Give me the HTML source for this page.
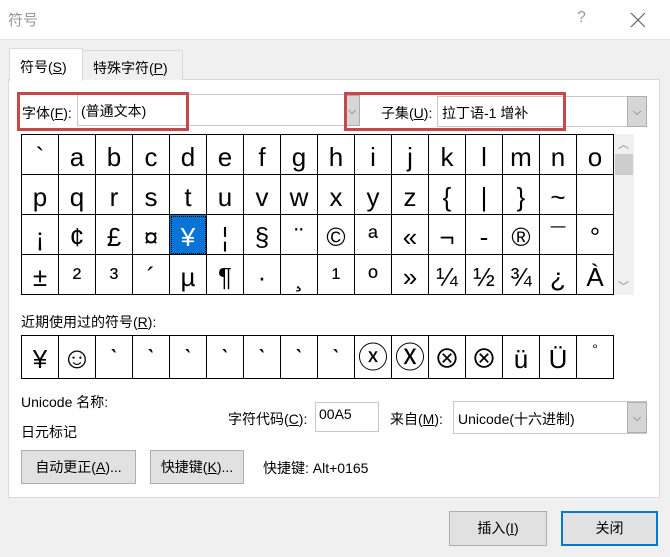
<!DOCTYPE html>
<html><head><meta charset="utf-8"><style>
*{margin:0;padding:0;box-sizing:border-box}
body{width:670px;height:557px;background:#f0f0f0;font-family:"Liberation Sans","Noto Sans CJK SC",sans-serif;font-size:14px;color:#000;position:relative;overflow:hidden}
.a{position:absolute}
.title{left:0;top:0;width:670px;height:40px;background:#fff;border-bottom:1px solid #e5e5e5}
.panel{left:8px;top:79px;width:652px;height:419px;background:#fff;border:1px solid #d9d9d9}
.grid{border-collapse:collapse;position:absolute}
.grid td{border:1px solid #000;width:37px;height:40px;text-align:center;font-size:26px;padding:4px 0 0 0;line-height:1}
.inp{background:#fff;border:1px solid #c8c8c8}
.dd{background:#d6d6d6;border:1px solid #adadad;color:#555;font-size:11px;text-align:center}
.btn{background:#e1e1e1;border:1px solid #adadad;text-align:center;font-size:14px}
.red{border:3px solid #c8474d}
u{text-decoration:underline}
</style></head><body>
<div class="a title"></div>
<div class="a" style="left:8px;top:9px;color:#999;font-size:15px">符号</div>
<div class="a" style="left:577px;top:9px;color:#999;font-size:16px">?</div>
<svg class="a" style="left:630px;top:12px" width="16" height="16"><path d="M1 1L15 15M15 1L1 15" stroke="#666" stroke-width="1.2"/></svg>
<div class="a panel"></div>
<div class="a" style="left:82px;top:50px;width:101px;height:30px;background:#f0f0f0;border:1px solid #d9d9d9;border-bottom:none"></div>
<div class="a" style="left:9px;top:48px;width:74px;height:33px;background:#fff;border:1px solid #d9d9d9;border-bottom:none"></div>
<div class="a" style="left:20px;top:57px">符号(<u>S</u>)</div>
<div class="a" style="left:93px;top:58px">特殊字符(<u>P</u>)</div>

<div class="a inp" style="left:77px;top:94px;width:268px;height:32px"></div>
<div class="a dd" style="left:344px;top:95px;width:16px;height:31px;line-height:30px">⌵</div>
<div class="a" style="left:22px;top:103px">字体(<u>F</u>):</div>
<div class="a" style="left:81px;top:101px">(普通文本)</div>
<div class="a red" style="left:17px;top:92px;width:172px;height:39px"></div>

<div class="a inp" style="left:437px;top:96px;width:192px;height:31px"></div>
<div class="a dd" style="left:627px;top:96px;width:20px;height:31px;line-height:30px">⌵</div>
<div class="a" style="left:381px;top:103px">子集(<u>U</u>):</div>
<div class="a" style="left:442px;top:103px">拉丁语-1 增补</div>
<div class="a red" style="left:344px;top:92px;width:222px;height:39px"></div>

<table class="grid" style="left:21px;top:134px">
<tr><td>`</td><td>a</td><td>b</td><td>c</td><td>d</td><td>e</td><td>f</td><td>g</td><td>h</td><td>i</td><td>j</td><td>k</td><td>l</td><td>m</td><td>n</td><td>o</td></tr>
<tr><td>p</td><td>q</td><td>r</td><td>s</td><td>t</td><td>u</td><td>v</td><td>w</td><td>x</td><td>y</td><td>z</td><td>{</td><td>|</td><td>}</td><td>~</td><td></td></tr>
<tr><td>¡</td><td>¢</td><td>£</td><td>¤</td><td style="background:#0a74d6;color:#fff;outline:1px dotted #000;outline-offset:-2px">¥</td><td>¦</td><td>§</td><td>¨</td><td>©</td><td>ª</td><td>«</td><td>¬</td><td>-</td><td>®</td><td>¯</td><td>°</td></tr>
<tr><td>±</td><td>²</td><td>³</td><td>´</td><td>µ</td><td>¶</td><td>·</td><td>¸</td><td>¹</td><td>º</td><td>»</td><td>¼</td><td>½</td><td>¾</td><td>¿</td><td>À</td></tr>
</table>
<div class="a" style="left:614px;top:134px;width:20px;height:161px;background:#f0f0f0"></div>
<div class="a" style="left:615px;top:154px;width:18px;height:21px;background:#cdcdcd"></div>
<div class="a" style="left:618px;top:136px;color:#888;font-size:11px">︿</div>
<div class="a" style="left:618px;top:278px;color:#888;font-size:11px">﹀</div>

<div class="a" style="left:21px;top:312px">近期使用过的符号(<u>R</u>):</div>
<table class="grid" style="left:21px;top:335px;border:1px solid #888">
<tr style="font-size:24px"><td style="height:43px">¥</td><td style="font-size:30px">☺</td><td>ˋ</td><td>ˋ</td><td>ˋ</td><td>ˋ</td><td>ˋ</td><td>ˋ</td><td>ˋ</td><td style="font-size:30px">ⓧ</td><td style="font-size:30px">Ⓧ</td><td>⊗</td><td>⊗</td><td>ü</td><td>Ü</td><td style="font-size:14px;vertical-align:top;padding-top:6px">°</td></tr>
</table>

<div class="a" style="left:21px;top:392px">Unicode 名称:</div>
<div class="a" style="left:21px;top:422px">日元标记</div>
<div class="a" style="left:228px;top:409px">字符代码(<u>C</u>):</div>
<div class="a inp" style="left:315px;top:402px;width:64px;height:30px;padding:3px 0 0 3px">00A5</div>
<div class="a" style="left:390px;top:409px">来自(<u>M</u>):</div>
<div class="a inp" style="left:453px;top:401px;width:194px;height:33px;padding:7px 0 0 4px">Unicode(十六进制)</div>
<div class="a dd" style="left:627px;top:402px;width:20px;height:31px;line-height:30px">⌵</div>

<div class="a btn" style="left:21px;top:450px;width:115px;height:34px;line-height:32px">自动更正(<u>A</u>)...</div>
<div class="a btn" style="left:150px;top:450px;width:94px;height:34px;line-height:32px">快捷键(<u>K</u>)...</div>
<div class="a" style="left:263px;top:458px">快捷键: Alt+0165</div>

<div class="a btn" style="left:449px;top:511px;width:98px;height:35px;line-height:33px">插入(<u>I</u>)</div>
<div class="a btn" style="left:561px;top:511px;width:97px;height:35px;line-height:31px;border:2px solid #0078d7">关闭</div>
</body></html>
